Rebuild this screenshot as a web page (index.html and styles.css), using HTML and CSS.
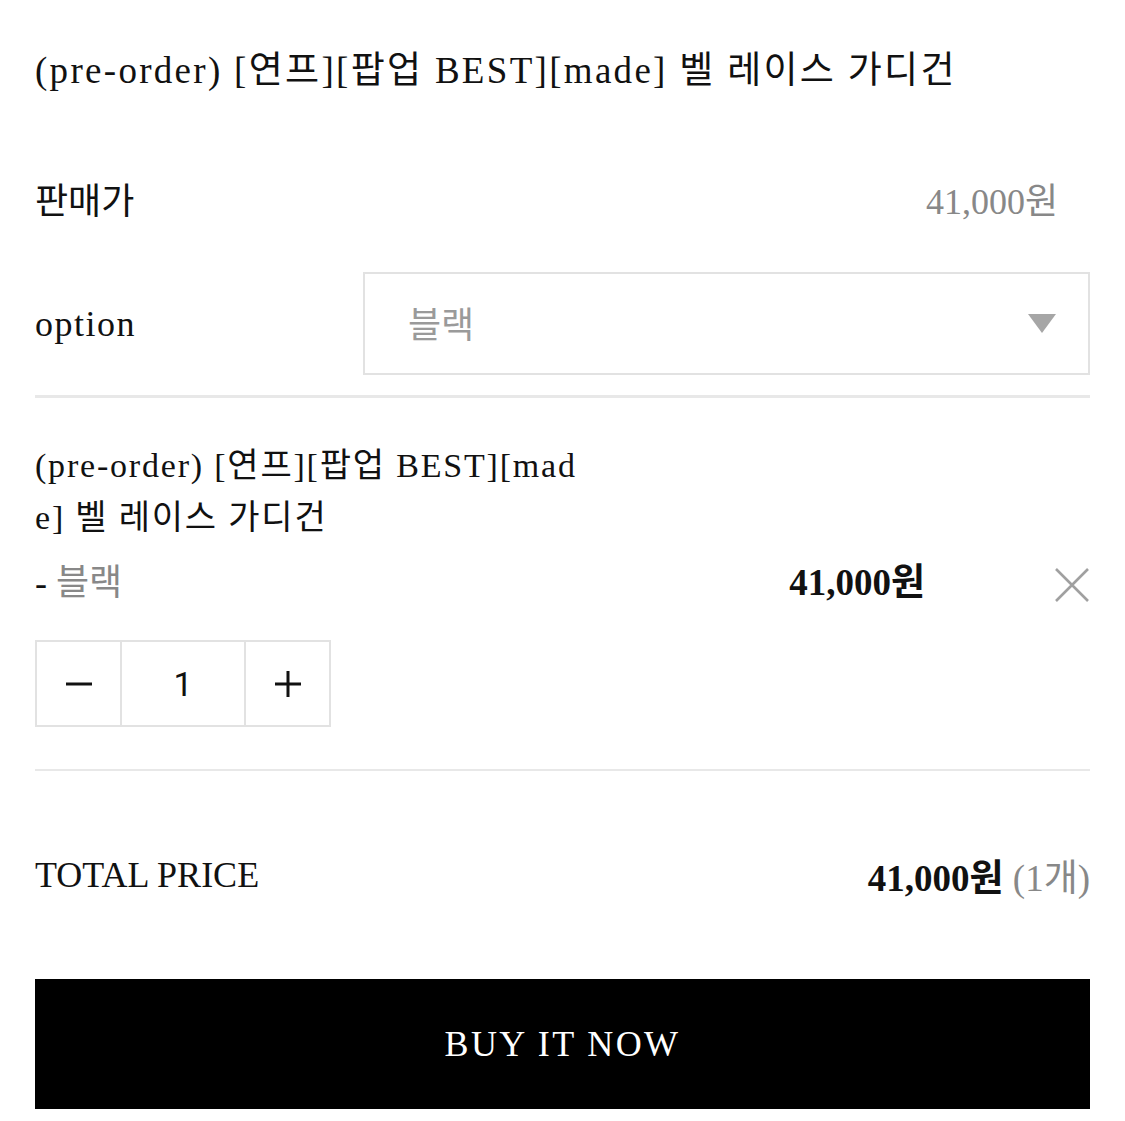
FILE: index.html
```html
<!DOCTYPE html>
<html lang="ko">
<head>
<meta charset="utf-8">
<link rel="stylesheet" href="styles.css">
</head>
<body>
<div class="page">
  <h1 class="title">(pre-order) [연프][팝업 BEST][made] 벨 레이스 가디건</h1>

  <div class="row price-row">
    <span class="label">판매가</span>
    <span class="sale-price">41,000원</span>
  </div>

  <div class="row option-row">
    <span class="label option-label">option</span>
    <div class="select">
      <span class="select-value">블랙</span>
      <svg class="caret" width="28" height="19" viewBox="0 0 28 19"><polygon points="0,0 28,0 14,19" fill="#a6a6a6"/></svg>
    </div>
  </div>

  <div class="divider thick"></div>

  <div class="item">
    <div class="item-name">(pre-order) [연프][팝업 BEST][made] 벨 레이스 가디건</div>
    <div class="item-row">
      <span class="item-opt">- <span class="gray">블랙</span></span>
      <span class="item-price">41,000원</span>
      <svg class="remove" width="36" height="36" viewBox="0 0 36 36"><path d="M2 2 L34 34 M34 2 L2 34" stroke="#a0a0a0" stroke-width="2.6" fill="none"/></svg>
    </div>
    <div class="qty">
      <span class="qty-btn"><svg width="28" height="28" viewBox="0 0 28 28"><path d="M1 14 H27" stroke="#111" stroke-width="3"/></svg></span>
      <span class="qty-val">1</span>
      <span class="qty-btn"><svg width="28" height="28" viewBox="0 0 28 28"><path d="M1 14 H27 M14 1 V27" stroke="#111" stroke-width="3"/></svg></span>
    </div>
  </div>

  <div class="divider"></div>

  <div class="row total-row">
    <span class="total-label">TOTAL PRICE</span>
    <span class="total-value"><strong>41,000원</strong> <span class="gray">(1개)</span></span>
  </div>

  <button class="buy">BUY IT NOW</button>
</div>
</body>
</html>
```

FILE: styles.css
```css
html, body {
  margin: 0;
  padding: 0;
  background: #fff;
}
body {
  font-family: "Liberation Serif", "Noto Sans CJK KR", serif;
  color: #111;
}
.page {
  padding: 0 35px;
  width: 1055px;
}
.title {
  margin: 0;
  padding-top: 46px;
  font-size: 37px;
  font-weight: normal;
  line-height: 50px;
  letter-spacing: 2.3px;
}
.row {
  display: flex;
  align-items: center;
  justify-content: space-between;
}
.label {
  font-size: 36px;
}
.option-label {
  letter-spacing: 1.5px;
}
.price-row {
  margin-top: 77px;
  height: 50px;
  padding-right: 32px;
}
.sale-price {
  font-size: 36px;
  color: #888;
}
.option-row {
  margin-top: 49px;
}
.select {
  box-sizing: border-box;
  width: 727px;
  height: 103px;
  border: 2px solid #e2e2e2;
  display: flex;
  align-items: center;
  justify-content: space-between;
  padding: 0 32px 0 43px;
}
.select-value {
  font-size: 36px;
  color: #9a9a9a;
  margin-top: -4px;
}
.divider {
  height: 2px;
  background: #e8e8e8;
}
.divider.thick {
  height: 3px;
  margin-top: 20px;
}
.item {
  padding-top: 42px;
  padding-bottom: 42px;
}
.item-name {
  width: 556px;
  font-size: 34px;
  line-height: 52px;
  word-break: break-all;
  letter-spacing: 1.8px;
}
.item-row {
  display: flex;
  align-items: center;
  margin-top: 10px;
  height: 50px;
}
.item-opt {
  font-size: 36px;
  flex: 1;
}
.gray {
  color: #888;
}
.item-price {
  font-size: 37px;
  font-weight: bold;
  margin-right: 129px;
}
.remove {
  display: block;
  margin-top: 12px;
}
.qty {
  display: flex;
  margin-top: 36px;
  width: max-content;
  border: 2px solid #e2e2e2;
}
.qty-btn, .qty-val {
  height: 83px;
  display: flex;
  align-items: center;
  justify-content: center;
}
.qty-btn {
  width: 83px;
}
.qty-val {
  width: 122px;
  border-left: 2px solid #e2e2e2;
  border-right: 2px solid #e2e2e2;
  font-family: "Roboto", "Liberation Sans", sans-serif;
  font-size: 34px;
  color: #111;
}
.total-row {
  height: 100px;
  margin-top: 54px;
}
.total-label {
  font-size: 36px;
}
.total-value {
  font-size: 37px;
}
.total-value strong {
  font-weight: bold;
}
.buy {
  display: block;
  box-sizing: border-box;
  width: 100%;
  height: 130px;
  margin-top: 54px;
  background: #000;
  color: #fff;
  border: none;
  font-family: "Liberation Serif", "Noto Sans CJK KR", serif;
  font-size: 36px;
  letter-spacing: 2.4px;
}
```
